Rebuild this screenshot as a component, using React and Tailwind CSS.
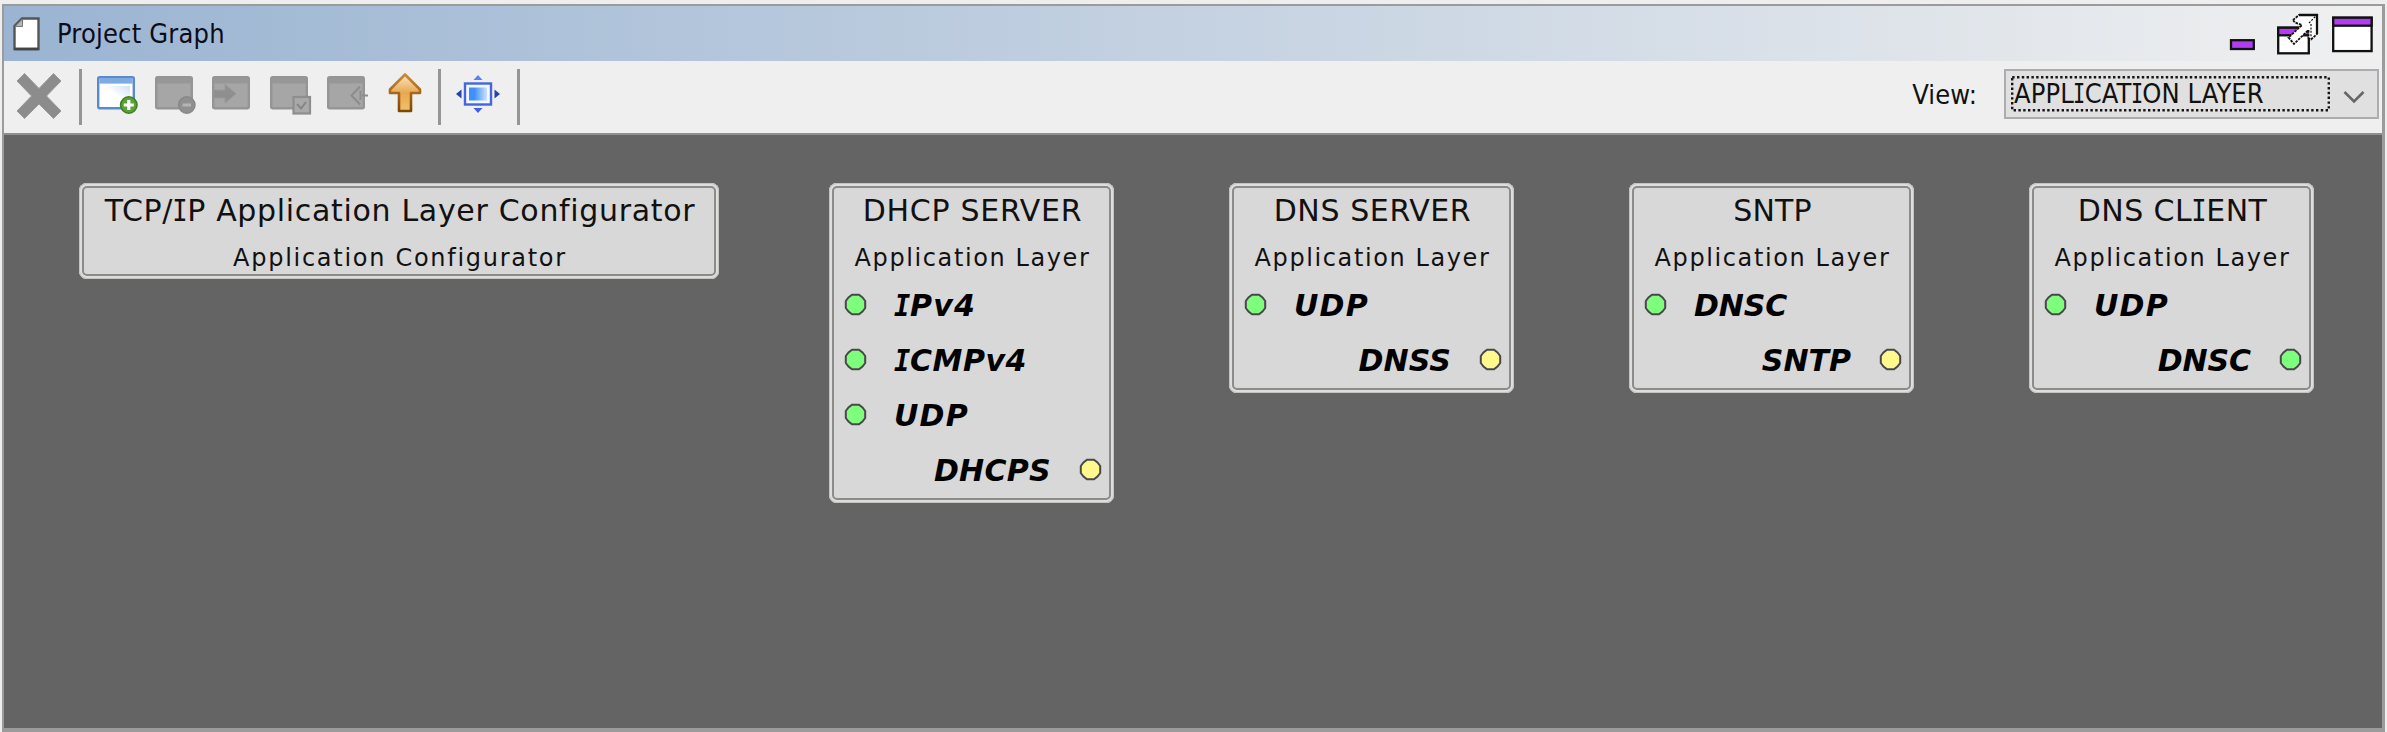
import React from "react";

const SANS = "font-['DejaVu_Sans','Liberation_Sans',sans-serif]";
const CONDENSED = "font-['DejaVu_Sans_Condensed','DejaVu_Sans','Liberation_Sans',sans-serif]";

const cards = [
  {
    title: "TCP/IP Application Layer Configurator",
    titleSpacing: "tracking-[0.68px]",
    subtitle: "Application Configurator",
    subtitleSpacing: "tracking-[1.72px]",
    place: "left-[75px] top-[48px] w-[640px]",
    ports: [],
  },
  {
    title: "DHCP SERVER",
    titleSpacing: "tracking-[0.7px]",
    subtitle: "Application Layer",
    subtitleSpacing: "tracking-[1.6px]",
    place: "left-[825px] top-[48px] w-[285px]",
    ports: [
      { name: "IPv4", spacing: "tracking-[1.2px]" },
      { name: "ICMPv4", spacing: "tracking-[0.5px]" },
      { name: "UDP", spacing: "tracking-[1.2px]" },
      { name: "DHCPS", out: true, spacing: "tracking-[0.3px]" },
    ],
  },
  {
    title: "DNS SERVER",
    titleSpacing: "tracking-[0.6px]",
    subtitle: "Application Layer",
    subtitleSpacing: "tracking-[1.6px]",
    place: "left-[1225px] top-[48px] w-[285px]",
    ports: [
      { name: "UDP", spacing: "tracking-[1.2px]" },
      { name: "DNSS", out: true, spacing: "tracking-[0.1px]" },
    ],
  },
  {
    title: "SNTP",
    titleSpacing: "tracking-[0.2px]",
    subtitle: "Application Layer",
    subtitleSpacing: "tracking-[1.6px]",
    place: "left-[1625px] top-[48px] w-[285px]",
    ports: [
      { name: "DNSC", spacing: "tracking-[-0.1px]" },
      { name: "SNTP", out: true, spacing: "tracking-normal" },
    ],
  },
  {
    title: "DNS CLIENT",
    titleSpacing: "tracking-[0.45px]",
    subtitle: "Application Layer",
    subtitleSpacing: "tracking-[1.6px]",
    place: "left-[2025px] top-[48px] w-[285px]",
    ports: [
      { name: "UDP", spacing: "tracking-[1.2px]" },
      { name: "DNSC", out: true, green: true, spacing: "tracking-[-0.1px]" },
    ],
  },
];

/* Capital I takes its serifs from the monospaced face. */
function Serifed({ text, glyph }) {
  return text.split(/(I)/).map((part, i) =>
    part === "I" ? (
      <span key={i} className={`inline-block font-['DejaVu_Sans_Mono',monospace] tracking-normal ${glyph}`}>
        I
      </span>
    ) : (
      part
    )
  );
}

function Dot({ green }) {
  return (
    <svg className="h-[23px] w-[23px] shrink-0" viewBox="0 0 23 23">
      <path
        d="M8 1.800H15L18.500 4.500L21.200 8V15L18.500 18.500L15 21.200H8L4.500 18.500L1.800 15V8L4.500 4.500Z"
        fill={green ? "#7dff7d" : "#fff88c"}
        stroke="#484848"
        strokeWidth="2"
      />
    </svg>
  );
}

function Port({ port }) {
  const label = (
    <span className={`pt-[2px] text-[30px] leading-[53px] font-bold italic text-black ${port.spacing}`}>
      <Serifed text={port.name} glyph="mx-[-1px] scale-x-90" />
    </span>
  );
  return port.out ? (
    <div className="flex h-[55px] items-center justify-end gap-[28px] pr-[12px]">
      {label}
      <Dot green={port.green} />
    </div>
  ) : (
    <div className="flex h-[55px] items-center gap-[27px] pl-[15px]">
      <Dot green />
      {label}
    </div>
  );
}

function Card({ card }) {
  return (
    <div
      className={`absolute rounded-[8px] bg-[#d8d8d8] whitespace-nowrap text-[#111] shadow-[inset_0_0_0_1px_#c2c2c0,inset_0_0_0_3px_#dededd,inset_0_0_0_5px_#8b8b8a] ${SANS} ${card.place} ${
        card.ports.length ? "pb-[6px]" : "pb-[2px]"
      }`}
    >
      <div className={`h-[55px] pl-[2px] text-center text-[30px] leading-[55px] ${card.titleSpacing}`}>
        <Serifed text={card.title} glyph="mx-[-2px] scale-x-85" />
      </div>
      <div className={`h-[39px] pt-[1px] pl-[2px] text-center text-[24px] leading-[39px] ${card.subtitleSpacing}`}>
        {card.subtitle}
      </div>
      {card.ports.map((p) => (
        <Port key={p.name} port={p} />
      ))}
    </div>
  );
}

function DocIcon() {
  return (
    <svg className="h-[34px] w-[27px]" viewBox="0 0 27 34">
      <path d="M9 1.5H25.5V32H1.5V9Z" fill="#fff" stroke="#555" strokeWidth="2.4" />
      <path d="M9.5 2V9.5H2Z" fill="#b5b5b5" stroke="#777" strokeWidth="1" />
      <path d="M1.5 32H25.5" stroke="#444" strokeWidth="2.6" />
    </svg>
  );
}

function WindowControls() {
  return (
    <svg className="h-[44px] w-[148px]" viewBox="0 0 148 44" fill="none" stroke="#111" strokeWidth="2.3">
      <rect x="2" y="27.2" width="22.8" height="8.8" fill="#b23df0" />
      <rect x="49.2" y="14.7" width="30.6" height="25.6" fill="#fff" />
      <rect x="49.2" y="14.7" width="30.6" height="7.6" fill="#b23df0" />
      <path
        d="M64 7L70 2H88V21L82 26.5L79.5 25V17L65 31L59.5 24.5L73 12L66 9.5Z"
        fill="#fff"
        strokeWidth="1.8"
        strokeDasharray="2.6 1"
      />
      <path d="M70 2H88V21" />
      <path d="M80 10L87 3M82 11V24" strokeWidth="1.2" strokeDasharray="2 1.4" />
      <rect x="104.2" y="4.7" width="38.4" height="33.4" fill="#fff" />
      <rect x="104.2" y="4.7" width="38.4" height="8" fill="#b23df0" />
    </svg>
  );
}

function DeleteIcon() {
  return (
    <svg className="h-[48px] w-[48px]" viewBox="0 0 48 48">
      <path
        d="M9.5 1.5L24 16.5L38.500 1.500L46 9L31.500 24L46 39L38.500 46.500L24 32L9.500 46.500L2 39L16.500 24L2 9Z"
        fill="#8c8c8c"
        stroke="#999"
        strokeWidth="1"
      />
    </svg>
  );
}

function NewWindowIcon() {
  return (
    <svg className="h-[42px] w-[44px]" viewBox="0 0 44 42">
      <defs>
        <linearGradient id="pane" x1="0" y1="1" x2="1" y2="0">
          <stop offset="0.5" stopColor="#fff" />
          <stop offset="1" stopColor="#d3e1f3" />
        </linearGradient>
      </defs>
      <rect x="2.200" y="2.200" width="35.600" height="31" rx="1.500" fill="#fdfeff" stroke="#5b8acb" strokeWidth="2.400" />
      <rect x="3.400" y="3" width="33.200" height="5.600" fill="#7fabe2" />
      <rect x="6" y="11" width="28" height="19" fill="url(#pane)" />
      <circle cx="32.800" cy="30" r="8.200" fill="#5ba136" stroke="#3f7f22" strokeWidth="1.600" />
      <path d="M32.800 25V35M27.800 30H37.800" stroke="#fff" strokeWidth="3.200" />
    </svg>
  );
}

function GrayWindowIcon({ kind }) {
  return (
    <svg className="h-[42px] w-[44px]" viewBox="0 0 44 42">
      <rect x="2.200" y="2.200" width="35.600" height="31" rx="1.500" fill="#a6a6a6" stroke="#959595" strokeWidth="2.400" />
      <rect x="3" y="3" width="34" height="5.500" fill="#979797" />
      {kind === "remove" && (
        <g>
          <circle cx="32.800" cy="30" r="8.200" fill="#909090" stroke="#878787" strokeWidth="1.400" />
          <path d="M28.500 30H37" stroke="#b4b4b4" strokeWidth="3" />
        </g>
      )}
      {kind === "enter" && (
        <path d="M2 15H14V9.500L25 18.800L14 28V23H2Z" fill="#8f8f8f" stroke="#999" strokeWidth="1" />
      )}
      {kind === "check" && (
        <g>
          <rect x="24.500" y="22" width="16.500" height="16.500" fill="#a9a9a9" stroke="#8e8e8e" strokeWidth="2.200" />
          <path d="M28 29L32 33.500L37 27" fill="none" stroke="#858585" strokeWidth="2" />
        </g>
      )}
      {kind === "leave" && (
        <path d="M34 11.500L25.500 20.500L34 29.500M34.500 15.500V25M36 20.500H42" fill="none" stroke="#8c8c8c" strokeWidth="2" />
      )}
    </svg>
  );
}

function UpIcon() {
  return (
    <svg className="h-[42px] w-[36px]" viewBox="0 0 36 42">
      <defs>
        <linearGradient id="up" x1="0" y1="0" x2="0" y2="1">
          <stop offset="0" stopColor="#fbe6c4" />
          <stop offset="0.500" stopColor="#e8a850" />
          <stop offset="1" stopColor="#f3c068" />
        </linearGradient>
        <linearGradient id="upEdge" x1="0" y1="0" x2="0" y2="1">
          <stop offset="0" stopColor="#cd8937" />
          <stop offset="1" stopColor="#7d4706" />
        </linearGradient>
      </defs>
      <path
        d="M18 2.500L33 17.500V21H24V39H12V21H3V17.500Z"
        fill="url(#up)"
        stroke="url(#upEdge)"
        strokeWidth="2.600"
        strokeLinejoin="round"
      />
    </svg>
  );
}

function FitIcon() {
  return (
    <svg className="h-[42px] w-[46px]" viewBox="0 0 46 42">
      <defs>
        <linearGradient id="fit" x1="0" y1="0" x2="1" y2="0">
          <stop offset="0.300" stopColor="#4090fb" />
          <stop offset="1" stopColor="#cfe2fd" />
        </linearGradient>
      </defs>
      <rect x="10" y="10.500" width="26" height="21" fill="#f4f8ff" stroke="#4565da" strokeWidth="2.400" />
      <rect x="14" y="14.500" width="18" height="13" fill="url(#fit)" />
      <path d="M23 2L27.500 7H18.500Z" fill="#5c80f0" />
      <path d="M23 40L27.500 35H18.500Z" fill="#3c60e8" />
      <path d="M1 21L6.500 16.500V25.500Z" fill="#2444a8" />
      <path d="M45 21L39.500 16.500V25.500Z" fill="#2444a8" />
    </svg>
  );
}

function Separator() {
  return <div className="mb-[1px] h-[56px] w-[3px] bg-[#959595]" />;
}

function ViewSelect() {
  return (
    <div className="flex h-[50px] w-[375px] items-center justify-between border-2 border-[#acacb1] bg-[#e0e0e0] pr-[11px] pl-[5px]">
      <div className="relative h-[36px] w-[319px]">
        <svg className="absolute inset-0 h-full w-full" viewBox="0 0 319 36">
          <rect x="1.200" y="1.200" width="316.600" height="33" fill="none" stroke="#151515" strokeWidth="2.400" strokeDasharray="2.400 2.400" />
        </svg>
        <span className={`relative block pl-[3px] text-[27px] leading-[36px] tracking-[0.1px] whitespace-nowrap text-[#111] ${CONDENSED}`}>
          <Serifed text="APPLICATION LAYER" glyph="mx-[-2.7px] scale-x-75" />
        </span>
      </div>
      <svg className="mt-[6px] h-[14px] w-[24px]" viewBox="0 0 24 14">
        <path d="M2.500 2L12 11.500L21.500 2" fill="none" stroke="#666" strokeWidth="2.600" />
      </svg>
    </div>
  );
}

export default function App() {
  return (
    <div className="h-[732px] w-[2387px] overflow-hidden bg-[#eeeeee] pt-[4px] pl-[2px]">
      <div className="flex h-[728px] w-[2383px] flex-col border-2 border-r-3 border-b-4 border-[#9b9b9b] bg-[#efefef]">
        <div className="flex h-[55px] items-center bg-linear-to-r from-[#9ab4d2] to-[#f0f0f0] pl-[9px]">
          <DocIcon />
          <span className={`ml-[17px] flex-1 text-[27px] leading-[53px] tracking-[0.2px] whitespace-nowrap text-[#0c0c18] ${CONDENSED}`}>
            Project Graph
          </span>
          <div className="mt-[2px] mr-[5px] flex">
            <WindowControls />
          </div>
        </div>

        <div className="flex h-[72px] items-center pr-[3px]">
          <div className="flex flex-1 items-center">
            <div className="ml-[11px] flex pb-[2px]">
              <DeleteIcon />
            </div>
            <div className="ml-[16px]">
              <Separator />
            </div>
            <div className="ml-[14px] flex gap-[13.600px] pb-[2px]">
              <NewWindowIcon />
              <GrayWindowIcon kind="remove" />
              <GrayWindowIcon kind="enter" />
              <GrayWindowIcon kind="check" />
              <GrayWindowIcon kind="leave" />
            </div>
            <div className="ml-[17px] flex pb-[8px]">
              <UpIcon />
            </div>
            <div className="ml-[15px]">
              <Separator />
            </div>
            <div className="ml-[14px] flex pb-[7px]">
              <FitIcon />
            </div>
            <div className="ml-[16px]">
              <Separator />
            </div>
          </div>
          <span className={`mr-[27px] pb-[5px] text-[27px] leading-[50px] tracking-[0.1px] text-[#111] ${CONDENSED}`}>View:</span>
          <div className="pb-[6px]">
            <ViewSelect />
          </div>
        </div>

        <div className="relative flex-1 border-t-2 border-[#8f8f8f] bg-[#646464]">
          {cards.map((card) => (
            <Card key={card.title} card={card} />
          ))}
        </div>
      </div>
    </div>
  );
}
